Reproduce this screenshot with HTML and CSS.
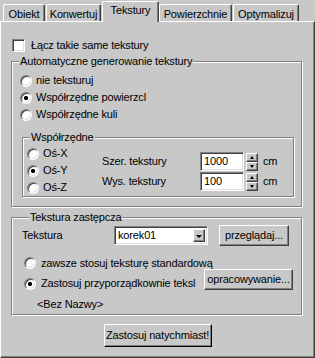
FILE: index.html
```html
<!DOCTYPE html>
<html lang="pl">
<head>
<meta charset="utf-8">
<title>Tekstury</title>
<link rel="stylesheet" href="styles.css">
</head>
<body>
<div class="dialog">
  <div class="tabs">
    <div class="tab tab-obiekt">Obiekt</div>
    <div class="tab tab-konw">Konwertuj</div>
    <div class="tab tab-tekst active">Tekstury</div>
    <div class="tab tab-pow">Powierzchnie</div>
    <div class="tab tab-opt">Optymalizuj</div>
  </div>
  <div class="panel">
    <div class="check-row"><span class="checkbox"></span><span class="lbl">Łącz takie same tekstury</span></div>

    <fieldset class="group g-auto">
      <legend>Automatyczne generowanie tekstury</legend>
      <div class="opt-list">
        <div class="radio-row"><span class="radio"></span><span class="lbl">nie teksturuj</span></div>
        <div class="radio-row"><span class="radio on"></span><span class="lbl">Współrzędne powierzcl</span></div>
        <div class="radio-row"><span class="radio"></span><span class="lbl">Współrzędne kuli</span></div>
      </div>

      <fieldset class="group g-coords">
        <legend>Współrzędne</legend>
        <div class="coords">
          <div class="axes">
            <div class="radio-row"><span class="radio"></span><span class="lbl">Oś-X</span></div>
            <div class="radio-row"><span class="radio on"></span><span class="lbl">Oś-Y</span></div>
            <div class="radio-row"><span class="radio"></span><span class="lbl">Oś-Z</span></div>
          </div>
          <div class="sizes">
            <div class="size-row">
              <span class="size-label">Szer. tekstury</span>
              <span class="field">1000</span>
              <span class="spin"><span class="spin-btn up"></span><span class="spin-btn down"></span></span>
              <span class="unit">cm</span>
            </div>
            <div class="size-row">
              <span class="size-label">Wys. tekstury</span>
              <span class="field">100</span>
              <span class="spin"><span class="spin-btn up"></span><span class="spin-btn down"></span></span>
              <span class="unit">cm</span>
            </div>
          </div>
        </div>
      </fieldset>
    </fieldset>

    <fieldset class="group g-sub">
      <legend>Tekstura zastępcza</legend>
      <div class="sub-row row-tex">
        <span class="tex-label">Tekstura</span>
        <span class="combo"><span class="combo-text">korek01</span><span class="combo-btn"></span></span>
        <span class="btn btn-browse">przeglądaj...</span>
      </div>
      <div class="sub-row row-std">
        <span class="radio"></span><span class="lbl">zawsze stosuj teksturę standardową</span>
      </div>
      <div class="sub-row row-assign">
        <span class="assign">
          <span class="radio on"></span><span class="lbl">Zastosuj przyporządkownie teksl</span>
        </span>
        <span class="btn btn-proc">opracowywanie...</span>
      </div>
      <div class="sub-row row-name">&lt;Bez Nazwy&gt;</div>
    </fieldset>

    <div class="apply-row"><span class="btn btn-apply">Zastosuj natychmiast!</span></div>
  </div>
</div>
</body>
</html>
```

FILE: styles.css
```css
* { box-sizing: border-box; }

html, body {
  margin: 0;
  padding: 0;
  background: #c8c8c8;
}

body {
  font-family: "Liberation Sans", Arial, sans-serif;
  font-size: 11px;
  line-height: 13px;
  letter-spacing: -0.15px;
  color: #000;
}

.dialog {
  width: 315px;
  height: 358px;
  display: flex;
  flex-direction: column;
}

/* ---------- tabs ---------- */
.tabs {
  height: 21px;
  display: flex;
  align-items: flex-end;
  padding-left: 3px;
}

.tab {
  height: 17px;
  padding-top: 3px;
  text-align: center;
  white-space: nowrap;
  border-top: 1px solid #fff;
  border-left: 1px solid #fff;
  border-right: 1px solid #404040;
  border-radius: 2px 2px 0 0;
  box-shadow: inset -1px 0 #808080;
  background: #c8c8c8;
}

.tab-obiekt { width: 42px; margin-right: 1px; }
.tab-konw { width: 55px; margin-right: 1px; }
.tab-tekst { width: 57px; }
.tab-pow { width: 73px; margin-right: 1px; }
.tab-opt { width: 66px; }

.tab.active {
  height: 21px;
  padding-top: 2px;
  margin-bottom: -1px;
  position: relative;
  z-index: 2;
}

/* ---------- panel ---------- */
.panel {
  flex: 1;
  border-top: 1px solid #fff;
  border-left: 1px solid #fff;
  border-right: 1px solid #404040;
  border-bottom: 1px solid #404040;
  box-shadow: inset -1px -1px #808080;
  padding: 17px 0 0 10px;
}

.lbl { white-space: nowrap; }

.check-row {
  display: flex;
  align-items: center;
  height: 13px;
  margin-left: 1px;
  gap: 6px;
}

.checkbox {
  width: 13px;
  height: 13px;
  flex: none;
  background: #fff;
  border: 1px solid;
  border-color: #808080 #fff #fff #808080;
  box-shadow: inset 1px 1px #404040, inset -1px -1px #dfdfdf;
}

/* ---------- group boxes ---------- */
.group {
  margin: 0;
  padding: 0;
  min-width: 0;
  border: 1px solid #808080;
  box-shadow: inset 1px 1px #fff, 1px 1px #fff;
}

.group legend {
  padding: 0 1px;
  margin-left: 7px;
  background: #c8c8c8;
  line-height: 13px;
}

.g-auto {
  width: 291px;
  margin-top: 3px;
  padding-bottom: 9px;
}

.opt-list {
  padding-top: 4px;
  padding-left: 8px;
}

.radio-row {
  display: flex;
  align-items: center;
  height: 17px;
  gap: 4px;
}

.radio {
  width: 12px;
  height: 12px;
  flex: none;
  border-radius: 50%;
  border: 1px solid;
  border-color: #808080 #fff #fff #808080;
  background: #fff;
  box-shadow: inset 1px 1px #404040, inset -1px -1px #dfdfdf;
}

.radio.on {
  background: radial-gradient(circle, #000 0 1.8px, #fff 2.4px);
}

.g-coords {
  width: 272px;
  margin: 8px 0 0 10px;
}

.coords {
  display: flex;
  padding-top: 1px;
}

.axes {
  width: 79px;
  padding-left: 4px;
}

.sizes {
  padding-top: 7px;
  display: flex;
  flex-direction: column;
  gap: 1px;
}

.size-row {
  display: flex;
  align-items: center;
  height: 19px;
}

.size-label {
  width: 98px;
}

.field {
  width: 44px;
  height: 19px;
  padding: 2px 0 0 3px;
  background: #fff;
  border: 1px solid;
  border-color: #808080 #fff #fff #808080;
  box-shadow: inset 1px 1px #404040, inset -1px -1px #dfdfdf;
}

.spin {
  display: flex;
  flex-direction: column;
  margin-left: 2px;
  width: 12px;
}

.spin-btn {
  height: 9px;
  border: 1px solid;
  border-color: #fff #404040 #404040 #fff;
  box-shadow: inset -1px -1px #808080;
  background: #c8c8c8;
  position: relative;
}

.spin-btn::after {
  content: "";
  position: absolute;
  left: 3px;
  width: 0;
  height: 0;
  border-left: 2px solid transparent;
  border-right: 2px solid transparent;
}

.spin-btn.up::after {
  top: 2px;
  border-bottom: 3px solid #000;
}

.spin-btn.down::after {
  top: 2px;
  border-top: 3px solid #000;
}

.unit {
  margin-left: 5px;
}

/* ---------- substitute texture ---------- */
.g-sub {
  width: 291px;
  margin-top: 4px;
  padding: 1px 0 3px 10px;
}

.sub-row {
  display: flex;
  align-items: center;
}

.row-tex {
  height: 21px;
}

.tex-label {
  width: 92px;
}

.combo {
  width: 94px;
  height: 19px;
  display: flex;
  align-items: center;
  background: #fff;
  border: 1px solid;
  border-color: #808080 #fff #fff #808080;
  box-shadow: inset 1px 1px #404040, inset -1px -1px #dfdfdf;
  padding: 0 2px 0 3px;
}

.combo-text {
  flex: 1;
}

.combo-btn {
  width: 12px;
  height: 13px;
  border: 1px solid;
  border-color: #fff #404040 #404040 #fff;
  box-shadow: inset -1px -1px #808080;
  background: #c8c8c8;
  display: flex;
  align-items: center;
  justify-content: center;
}

.combo-btn::after {
  content: "";
  border-left: 3px solid transparent;
  border-right: 3px solid transparent;
  border-top: 3px solid #000;
  margin-top: 1px;
}

.btn {
  display: flex;
  align-items: center;
  justify-content: center;
  white-space: nowrap;
  border: 1px solid;
  border-color: #fff #404040 #404040 #fff;
  box-shadow: inset -1px -1px #808080;
  background: #c8c8c8;
}

.btn-browse {
  width: 70px;
  height: 21px;
  margin-left: 11px;
}

.row-std {
  height: 12px;
  margin-top: 11px;
  padding-left: 2px;
  gap: 5px;
}

.row-assign {
  height: 21px;
  align-items: stretch;
}

.assign {
  display: flex;
  align-items: center;
  gap: 5px;
  padding-left: 2px;
  margin-top: 8px;
  height: 13px;
  width: 182px;
}

.btn-proc {
  width: 89px;
  height: 21px;
}

.row-name {
  margin-top: 8px;
  padding-left: 15px;
  height: 13px;
}

.apply-row {
  display: flex;
  justify-content: center;
  margin-top: 9px;
  padding-right: 10px;
}

.btn-apply {
  width: 108px;
  height: 23px;
  border-color: #fff #000 #000 #fff;
}
```
